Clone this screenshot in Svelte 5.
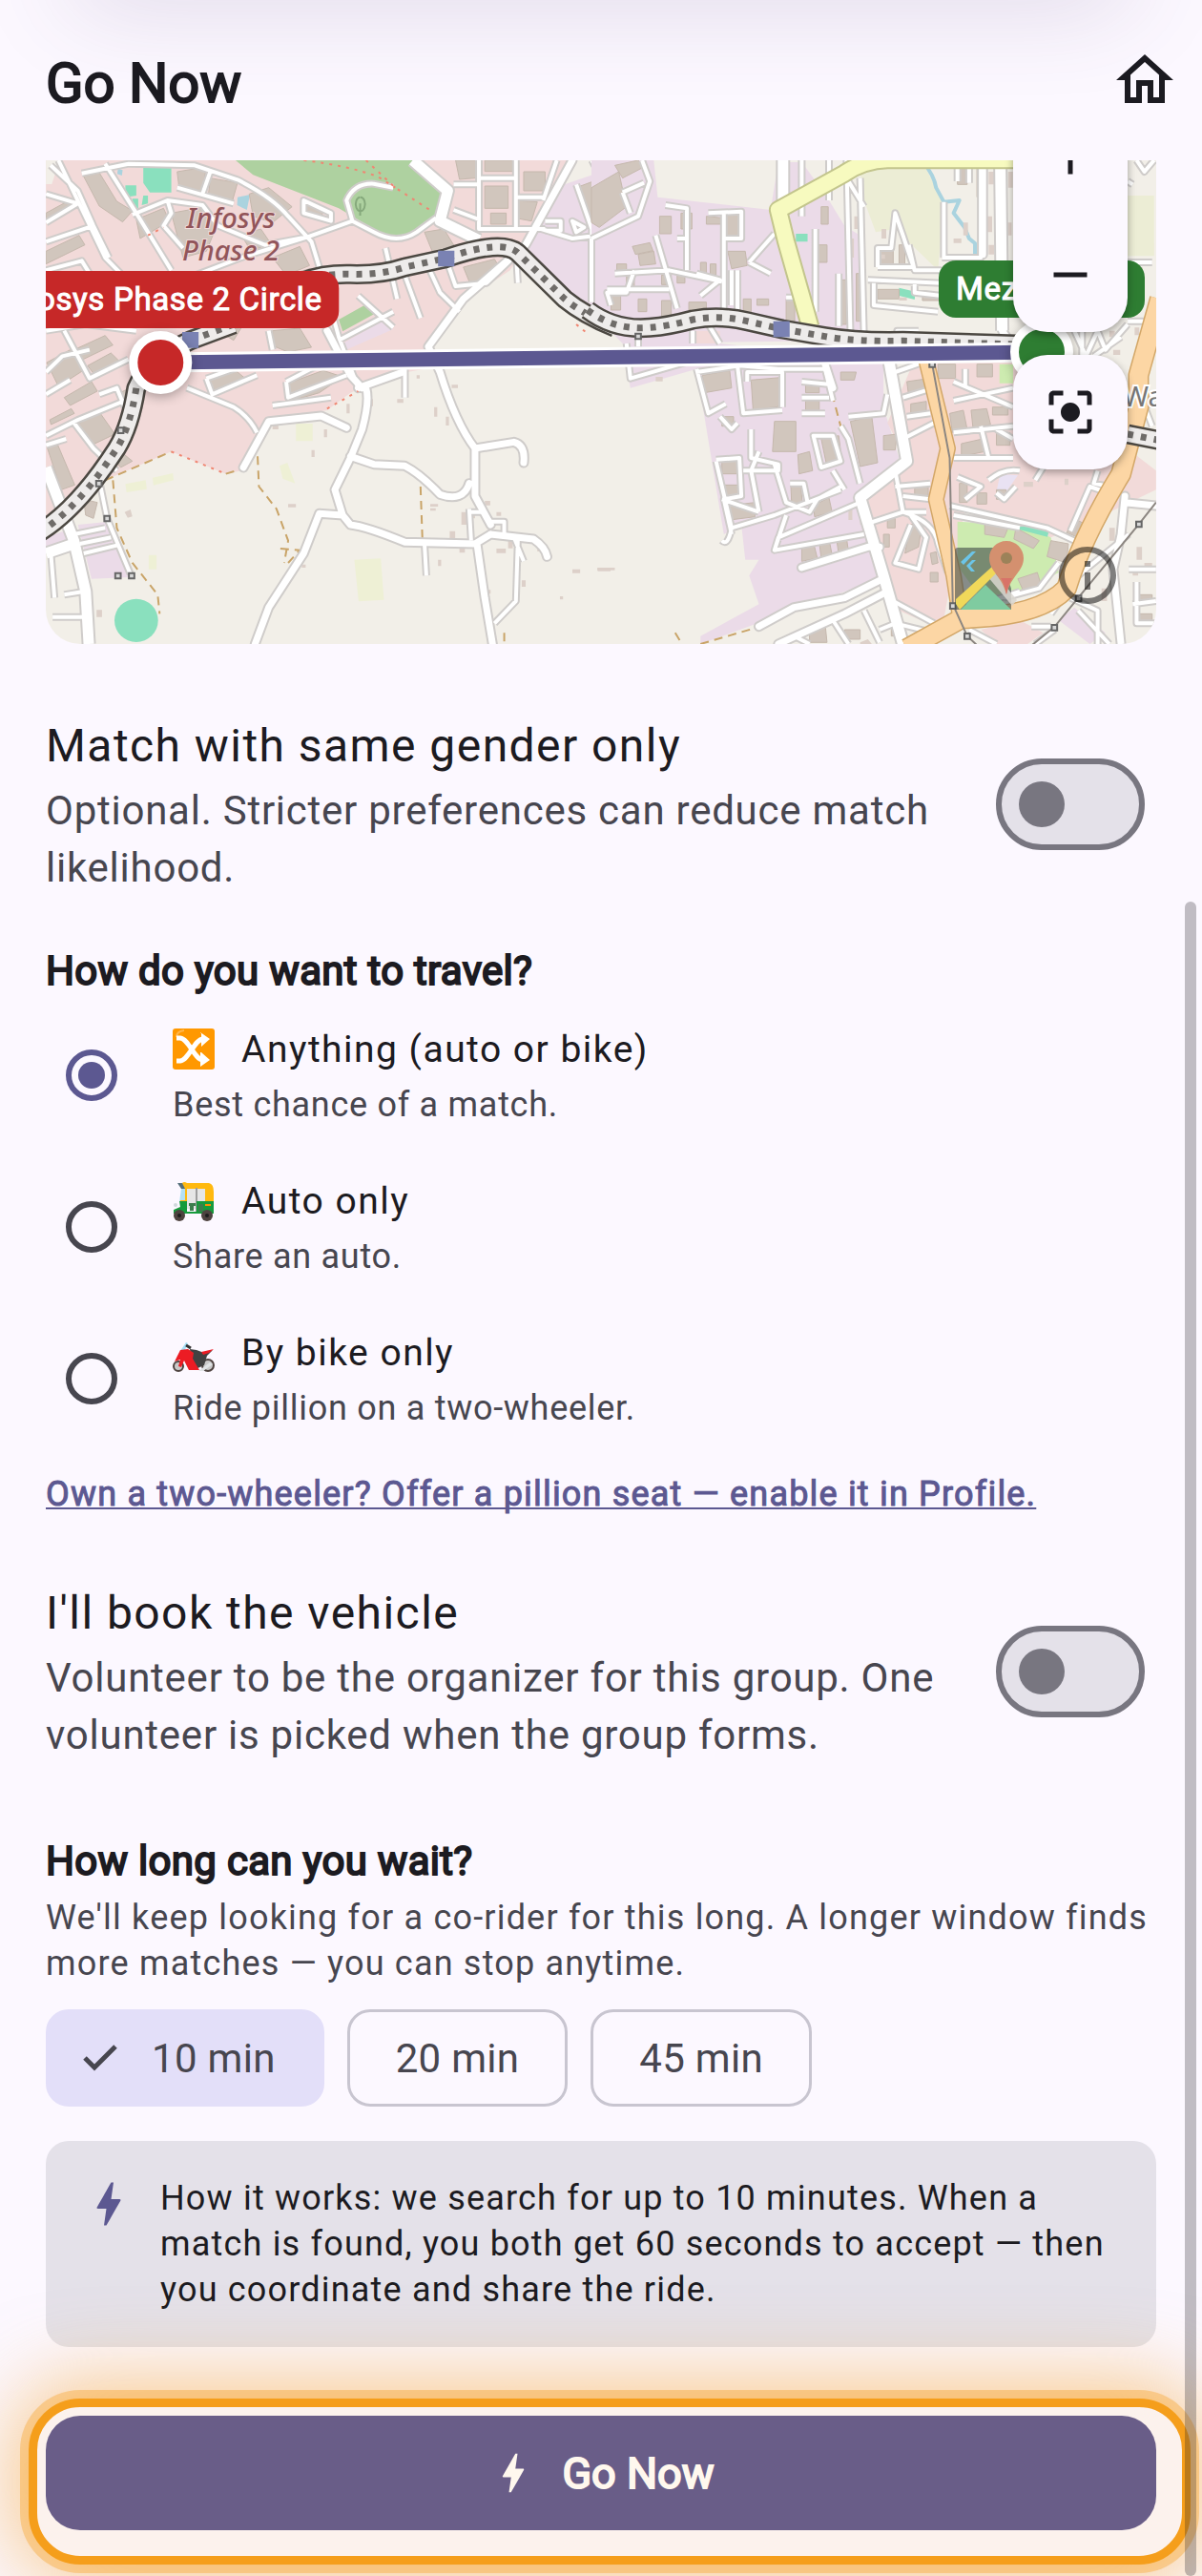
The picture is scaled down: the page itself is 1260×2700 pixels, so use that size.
<script lang="ts">
	type Option = { id: string; title: string; note: string };

	const travelOptions: Option[] = [
		{ id: 'any', title: 'Anything (auto or bike)', note: 'Best chance of a match.' },
		{ id: 'auto', title: 'Auto only', note: 'Share an auto.' },
		{ id: 'bike', title: 'By bike only', note: 'Ride pillion on a two-wheeler.' }
	];
	const waits = [10, 20, 45];

	let sameGender = $state(false);
	let organizer = $state(false);
	let travel = $state('any');
	let wait = $state(10);

	const bolt =
		'M11 21h-1l1-7H7.5c-.58 0-.57-.32-.38-.66.19-.34.05-.08.07-.12C8.48 10.94 10.42 7.54 13 3h1l-1 7h3.5c.49 0 .56.33.47.51l-.07.15C12.96 17.55 11 21 11 21z';

	// The map is drawn as two tiles, each in its own tile units.
	const west = {
		buildings: [
			'M215 75l40-12 45 90 40 30-25 35-60-50z',
			'M455 60l75-15-10 75-60-10zM540 80l70 15-15 65-60-25z',
			'M440 190l90-20 30 50-30 90-60 20z',
			'M350 210l70-35 15 40-75 55z',
			'M118 190l60-40 10 25-70 45zM118 310l85-50 15 30-100 60z',
			'M640 130l50-20 60 60-50 50-50-20zM700 330l70-35 25 60-60 30z',
			'M120 660l60-40 40 60-70 55zM190 620l80-45 20 30-85 50z',
			'M190 860l65-45 40 70-60 35zM122 930l25-15 45 130-35 15z',
			'M225 670l60-40 25 30-60 50zM165 770l70-50 15 30-70 45z',
			'M700 560l70-8 30 60-60 15-40-20zM530 710l70-30 30 30-70 50z',
			'M730 730l100-45 50 20-60 50-70 25z',
			'M1170 24h60v55l-50 5zM1245 24h80v35h-80zM1345 60h55v60h-55z',
			'M1245 105h60v70h-60zM1320 150l60 5-15 60-45-10zM1260 190h40v35h-40z',
			'M1480 110l88-40v160l-50-5z',
			'M1090 250l50-10 30 60-60 10zM1190 360l80-25 20 40-80 45z',
			'M215 1090l35 10-10 50-20-10zM560 560l60-10-20 40z',
			'M740 385l55-20 15 10H740zM620 260l50-20 25 45-50 25zM780 160l55 15-10 25-45-10z',
			'M128 840l55-35 8 15-60 35zM290 960l30-10 20 20-30 20zM300 760l25-15 10 35-25 15z'
		],
		sheds:
			'M700 855h15v15h-15zM832 870h8v25h-8zM800 935h8v22h-8zM740 1105h20v10h-20zM1105 1105h20v8h-20zM1105 1118h14v8h-14zM1155 1190h14v28h-14zM1185 1130h14v40h-14zM1210 1130h10v20h-10zM1245 1095h14v14h-14zM1275 1130h12v12h-12zM1275 1245h24v14h-24zM1305 1220h12v24h-12zM1180 1240h14v18h-14zM1380 1240h10v14h-10zM1160 730h16v10h-16zM1115 800h8v30h-8zM1145 830h8v28h-8zM1020 775h16v12h-16zM1340 1345h10v20h-10zM1470 1310h20v12h-20zM1535 1308h33v8h-33zM1438 1395h8v10h-8zM1240 1375h20v12h-20zM775 1295h10v10h-10zM320 1130l15-8 5 22-12 4zM248 1438h14v22h-14zM890 790h8v30h-8zM1125 1280h8v20h-8zM950 775h8v22h-8zM1070 700h8v10h-8z',
		minor: [
			'M150 24L180 100L270 330L310 380',
			'M270 35L350 190L440 370',
			'M118 130L200 160L118 220M118 280L240 230L280 330',
			'M118 370L210 340L230 380',
			'M210 65L330 35L500 40L610 85Q700 140 740 200L800 280L830 400L870 580L920 740',
			'M340 195L430 150L520 165L560 230L680 290L790 265L905 215',
			'M430 150L440 190L420 230L470 300',
			'M470 400L620 330L790 265',
			'M905 215L890 150Q910 95 960 98L1010 110',
			'M905 215L960 250Q1020 290 1070 250L1120 205',
			'M780 150L850 190L850 215L780 190Z',
			'M540 60L520 130M455 110L600 160',
			'M130 40L200 120L240 230',
			'M1165 100H1230M1230 24V240L1400 240M1325 24V240M1230 80H1325M1325 140H1400M1165 180L1230 210M1430 24L1395 150',
			'M118 560L220 540L350 560M165 560L230 710L330 650M118 690L160 640L230 620M118 760L180 715',
			'M118 890L200 840L320 780M190 850L240 930L300 1000M118 920L170 900M255 760L300 740L320 800',
			'M480 740L600 800Q640 830 660 880',
			'M530 710L600 680L640 660M530 710L545 760L660 700',
			'M735 720L830 660M735 720L740 770L890 700M700 795L850 770',
			'M690 560L700 620M990 300L1020 460M1035 370L1080 520M1100 360L1130 440L1180 500M1150 350L1170 420L1250 410L1310 340M1325 310L1330 410',
			'M920 450L1010 550M870 590L1010 500',
			'M250 1000L275 1150L335 1325',
			'M190 1200L270 1180M205 1230L285 1210M215 1260L300 1235',
			'M1040 680L1040 770M1090 1225L1095 1330M1320 1210L1345 1285M1205 1120L1210 1220M1205 1130H1240L1260 1160H1295V1215',
			'M1520 24L1568 140M1480 100L1520 240V450M1390 240L1470 270L1568 255M1400 215h40v30h-40M1470 215l30 20-20 15z',
			'M1330 1215L1325 1410L1270 1480M130 1250L140 1400M135 1460H220M165 1390L215 1380'
		],
		roads: [
			'M1470 24L1350 290L1190 460L1100 610L1130 690Q1170 850 1220 930L1220 1080L1260 1170',
			'M1220 930L1320 910Q1350 920 1345 975',
			'M920 740L1035 690M940 740Q950 780 930 870L900 960L860 1060L880 1140L900 1170Q940 1175 1040 1225L1220 1230L1260 1200',
			'M900 955L960 980L1040 985Q1080 1010 1130 1075Q1190 1100 1205 1040',
			'M880 1140L820 1135L780 1260L690 1430L655 1545',
			'M625 990L690 845L825 828L890 865',
			'M1225 1230L1245 1400L1265 1545',
			'M1260 1200L1370 1215Q1400 1240 1405 1270',
			'M840 560L900 700L930 740'
		],
		main: ['M1060 24L1150 120L1130 215L1230 275', 'M118 990L190 1220L220 1380L228 1545', 'M118 1260L190 1230'],
		tracks: ['M270 1030L440 940', 'M580 1010L620 995', 'M660 910L665 1050L710 1120L740 1220L730 1290', 'M290 1030L300 1180L340 1290L405 1390L410 1450', 'M1080 1050L1085 1220', 'M720 1245L770 1250L740 1290', 'M1295 1510V1545']
	};

	const east = {
		buildings: [
			'M0 110L70 60L90 170L20 235L0 220z',
			'M60 40L120 24L135 45L80 80z',
			'M345 190h40v80h-40zM230 190h28v50h-28zM175 200h30v55h-30zM295 200l40 5v20h-40z',
			'M105 295l45-12 8 25-45 12zM120 320l40-10 5 40-40 5zM350 310h45l5 45-40 10z',
			'M180 385h25v30h-25zM220 380h20v30h-20zM280 345h15v35h-15zM305 350h15v35h-15zM65 350h25v20h-25zM90 380h20v45h-20z',
			'M50 445h25v50h-25zM120 460h22v40h-22zM180 465h25v50h-25zM250 470h45v25h-45zM390 460h20v45h-20zM425 460h30v20h-30z',
			'M590 170h18v55h-18zM580 290h25v55h-25zM630 400h12v90h-12z',
			'M285 700l70-15 5 55-70 15zM410 715l75-8 5 90-75 12z',
			'M470 845h55v95h-60zM590 900l45-10 8 75-40 12zM665 845l55-15 15 145-45 12z',
			'M335 970h45v40h-45zM340 1045h45v40h-45zM350 1110l70-10v45l-65 10zM530 950l30-10 8 60-35 10z',
			'M512 1045l25-10 5 75-28-5zM570 1110l40-25 8 45-45 15zM335 830h30v30h-30zM550 730h35v25h-35zM550 780h35v30h-35z',
			'M540 1235l30-10 10 50-40 10zM585 1225l25-10 8 50-28 10zM630 1220l25-8 5 40-25 10zM750 890l35-5-5 50h-30z',
			'M810 720l45-8 5 45-45 10zM820 790l40-8v40l-40 8zM920 820l35-10 10 60-38 10zM975 810l40-5 10 50-45 12zM950 915l55-15 5 40-60 15z',
			'M830 1050h35v30h-35zM890 665h45v45h-45zM990 665h40v40h-40z',
			'M820 1170l30-10-10 80-35 20zM1010 1165l60 15-10 30-50-10zM1090 1180l60 40-15 25-50-30z',
			'M945 1040h20v60h-20zM990 1070h25v35h-25zM1040 1060h25v30h-25zM1180 1220l45 10-5 60-50-20z',
			'M740 300h35v50h-35zM790 290h15v80h-15zM735 430h55v30h-55zM850 440h50v25h-50z',
			'M640 400h15v140h-15zM680 380h12v150h-12zM500 460h22v70h-22zM990 40l15 100h-15zM940 40h25v60h-25z',
			'M560 1490l40-10 5 60h-45zM650 1500h40v30h-40zM770 1480h35v40h-35zM1240 1150l30 20-20 40-30-15z',
			'M1095 1340l50-20 10 40-45 20zM1395 1390h45v25h-45zM1400 1450h40v30h-40z',
			'M1030 800h40v25h-40zM1040 880h35v40h-35zM640 690h40l-5 25h-35zM760 1150h20v30h-20zM750 1200h15v40h-15zM870 1320h20v30h-20zM870 1260l15-5 5 35-15 5z'
		],
		sheds:
			'M745 240h12v30h-12zM675 200h12v40h-12zM660 270h14v60h-14zM790 455h20v10h-20zM1020 60h14v40h-14zM1070 60h12v50h-12zM955 220h12v40h-12zM930 270h20v14h-20zM1015 200h14v50h-14zM1020 290h14v30h-14zM1065 220h14v40h-14zM960 390h20v14h-20zM1255 590h10v20h-10zM1290 560h12v18h-12zM1330 560h14v20h-14zM1395 550h12v24h-12zM1410 580h14v24h-14zM1340 620h18v16h-18zM1240 660h14v14h-14zM1385 360h30v20h-30zM165 705h18v14h-18zM15 1305h45v8h-45zM1110 1035h24v16h-24zM1215 1025h10v20h-10zM660 1120h10v35h-10zM690 1150h8v20h-8zM740 320h14v14h-14zM690 1540l20-10 10 15h-30zM1200 1310h20v30h-20zM1330 1180h14v40h-14zM1400 1240h14v40h-14zM1420 1290h20v24h-20zM1310 1370h14v40h-14zM1340 1430h8v30h-8zM1390 1310h14v20h-14z',
		minor: [
			'M0 270L120 200L150 90L130 24M80 125L135 95M80 125L100 190',
			'M190 165L245 175V370M220 270H245M270 380L330 400L280 450M340 190V500M300 190L385 185V270H340',
			'M60 380L200 370L335 405M40 430H200M165 260L220 490M405 345L470 255M405 345L460 380M360 370V480M375 370V500',
			'M540 24V200M610 24V150M0 270V470M110 370L90 440H40L50 480',
			'M655 24L665 560M690 80L700 580M655 80L700 170M575 240V500M635 380V545M500 455H545',
			'M710 400L900 410M735 360V300H770L780 190L800 260L830 370H900M735 360H830M815 290L830 370M725 410V480L890 500M830 410V440L900 450L1083 500',
			'M905 155V330M1000 24V330H900M940 24V90M970 24V95M785 590V560H840',
			'M270 680L300 820L345 790M270 690L380 670L480 680L600 680M375 670L390 820L490 810M400 720V690H490V800',
			'M330 830L360 870L375 850M410 870V960L480 980V1000H390M320 965L380 960L385 1080L340 1090L360 1200M335 1090L430 1130',
			'M320 970L360 1180Q350 1240 335 1220M360 1180L470 1140L640 1060M430 940L410 1000L430 1130M470 980L500 1100L560 1130L580 1090L640 1050',
			'M570 890H620L640 970L590 990ZM600 680L620 780M540 720L620 730M540 770L610 770M540 820H600M640 860L660 900L690 1040',
			'M660 830L750 820L760 760M650 1060L620 1000M510 1040H545L555 1100',
			'M690 1100L480 1210L470 1250L700 1200M470 1250L500 1140M700 1170L800 1130Q880 1160 890 1230L915 1320',
			'M780 1000L800 1130L860 1130M780 1050L870 1040M800 1080L870 1090M820 1170L780 1290L840 1310L860 1210L820 1140',
			'M800 900L880 850M800 770L880 740M810 830L870 820M780 690L850 660',
			'M930 780L1083 740M930 720L1083 800M960 680V740M930 880L1083 860M930 960H1083M1000 860L1020 960M1040 870L1083 900',
			'M920 1110L1170 1180L1240 1220M930 1140L1100 1180M940 1020L1000 1050L960 1090M1020 1030Q1060 990 1100 1000M1040 1070L1060 1090L1090 1050M1140 1030L1160 990',
			'M1230 1190L1280 1050L1350 1080M1300 1000L1290 1040L1330 1050M1390 700L1440 860M1420 760L1440 800',
			'M1100 1380L1000 1420M1060 1400L1150 1370L1200 1290M970 1500L1040 1545M1250 1440L1330 1545M1180 1450L1250 1330L1380 1200',
			'M1190 1500L1140 1545M1130 1490H1180M1230 1400L1300 1440V1545M1390 1420L1450 1410M1400 1350V1480H1450M1380 1310H1450',
			'M620 1470L660 1545M520 1520L560 1545M700 1440L740 1540M740 1500L780 1480L880 1510M760 1400L880 1480',
			'M1390 100L1377 90M1400 24L1420 60L1445 24M1377 345H1440M1240 560L1270 640L1300 560L1320 620L1377 540M1260 560V640M1377 530H1450M1290 640L1360 580',
			'M90 600L100 710L270 650M120 580V610M260 560V600M300 540L330 600'
		],
		roads: ['M540 1305L710 1240L740 1240', 'M430 1490L520 1430L650 1400L740 1345', 'M480 1545L650 1450L760 1380', 'M1370 1080L1360 1200L1340 1310L1360 1545', 'M1370 1100L1450 1110', 'M600 665L620 740', 'M1005 24V320', 'M1055 560L1100 640'],
		main: ['M492 24V160', 'M765 660L810 970L690 1085L750 1330L800 1545', 'M1050 24L1055 560'],
		tracks: ['M600 670L625 790L640 860', 'M280 1545L420 1495', 'M215 1510L230 1540']
	};
</script>

<svelte:head>
	<title>Go Now</title>
</svelte:head>

{#snippet streets(tile)}
	<path class="building" d={tile.buildings.join('')} />
	<path class="building shed" d={tile.sheds} />
	<path class="track" d={tile.tracks.join('')} />
	<path class="minor-case" d={tile.minor.join('')} />
	<path class="road-case" d={tile.roads.join('')} />
	<path class="main-case" d={tile.main.join('')} />
	<path class="minor" d={tile.minor.join('')} />
	<path class="road" d={tile.roads.join('')} />
	<path class="main-road" d={tile.main.join('')} />
{/snippet}

{#snippet rail(d)}
	<path class="rail-edge" {d} />
	<path class="rail-bed" {d} />
	<path class="rail-dots" {d} />
{/snippet}

<div class="page">
	<div class="top-glow"></div>

	<header>
		<h1>Go Now</h1>
		<button class="home" aria-label="Home">
			<svg viewBox="0 0 24 24"><path d="M12 5.69l5 4.5V18h-2v-6H9v6H7v-7.81l5-4.5M12 3L2 12h3v8h6v-6h2v6h6v-8h3L12 3z" /></svg>
		</button>
	</header>

	<main>
		<section class="map" aria-label="Route map">
			<svg class="tiles" viewBox="0 0 1164 507" preserveAspectRatio="xMidYMid slice">
				<rect width="1164" height="507" fill="#f2efe8" />
				<g transform="translate(-48 -8) scale(.40816 .33333)">
					<path fill="#f2dad9" d="M118 24H1470L1350 290L1310 370L1200 460L1100 600L1090 680L1000 700L900 755L840 810L690 840L620 1000L580 1010L440 940L270 1030L200 1140L118 1150Z" />
					<path fill="#f2efe8" d="M118 24h35l-20 75h-15z" />
					<path fill="#ebdbe8" d="M1568 50L1450 100L1380 250L1350 290L1430 430L1568 540ZM200 1170L280 1160L335 1335L235 1340ZM880 600L980 530L1010 555L880 625ZM118 1210L175 1185L185 1235L118 1255Z" />
					<path fill="#aed1a0" d="M605 24H1060L1135 110L1130 210L1050 265Q1000 270 960 240L870 175L650 70ZM870 525L950 470L965 505L880 562Z" />
					<path fill="#8ae0be" d="M385 30h55v95h-55l-17-30v-50zM322 103h28v32l-28 5zM340 145h15v30h-12zM368 135h12v25l-16 5z" />
					<ellipse cx="350" cy="1471" rx="56" ry="68" fill="#8ae0be" />
					<path fill="#aad3df" d="M610 140l32-8-8 48-25-15zM303 50l12 5-2 17-12-5z" />
					<path fill="#eef0d5" d="M760 852h43v55h-43zM910 1280l68-4 8 130-65 5zM322 1042l52-12 3 28-52 10zM392 1022l52-14 2 22-52 16zM718 985l20-10 20 65-32-15zM382 1265h20v45h-20z" />
					{@render streets(west)}
					<path class="footway" d="M780 24Q890 40 970 75L1015 110M940 24L1015 110L1110 185M440 940L580 1010M840 805L920 750M380 260L420 235M1480 540L1510 570" />
					{@render rail('M100 1195Q200 1120 300 930Q335 860 350 740Q380 650 490 590L600 540M780 405Q830 380 900 382Q980 385 1040 360L1145 332Q1290 270 1330 315Q1400 400 1450 460Q1500 510 1580 550')}
					<path fill="#7a82b3" d="M1125 308h42v50h-42zM468 564h42v50h-42z" />
					<path class="post" d="M247 1032h14v17h-14zM268 1142h14v17h-14zM296 1322h14v17h-14zM331 1322h14v17h-14zM303 865h14v17h-14z" />
					<path fill="none" stroke="#86a97c" stroke-width="2" d="M925 140a12 22 0 1 0 1 0M925 160v38" />
				</g>
				<g transform="translate(572 -8) scale(.40816 .33333)">
					<path fill="#ebdbe8" d="M0 24H160L170 140L460 180L480 30H540L600 130L650 230L690 260L700 590L80 600L0 500ZM80 600L260 590L750 660L750 800L790 960L690 1080L740 1340L560 1420L280 1545V1520L430 1420L405 1330L430 1280H395L385 1170L340 1200L270 680L100 740ZM1200 1470L1240 1430L1320 1510L1280 1545Z" />
					<path fill="#f2dad9" d="M760 850L830 650L1090 660L1450 1000V1060L1280 1160L1180 1210L960 1120L930 1300L900 1500L790 1440L700 1090L810 970ZM265 560H330V600H265ZM1000 1500L1100 1470L1160 1510L1120 1545H1040Z" />
					<path fill="#ecedd5" d="M690 60L850 30L905 155L890 370L780 240L730 250L700 150ZM1377 135h68v190h-68z" />
					<path fill="#f2efe8" d="M710 480L1083 500V590L730 580Z" />
					<path fill="#cdebb0" d="M940 1160L1100 1170L1180 1210L1200 1320L1080 1400L1000 1400L940 1300ZM1048 665h35v60h-35z" />
					<path fill="#8ae0be" d="M1095 1165l80 25-4 18-80-25zM790 425l42 12-2 25-40-12zM525 255h30v25h-30z" />
					<path fill="#e9e2f3" d="M1050 1010l45 5-35 60-20-10z" />
					<path class="stream" d="M848 24Q880 70 885 110L905 155L945 150L930 190L958 235L970 270L985 285V325" />
					{@render streets(east)}
					<path class="yellow-case" d="M562 548L500 280L480 180L650 65Q700 24 760 22H1090" />
					<path class="yellow-road" d="M562 548L500 280L480 180L650 65Q700 24 760 22H1090" />
					<path class="orange-case" d="M860 655L915 930L885 1090L930 1330L945 1450" />
					<path class="orange-case wide" d="M810 1560L950 1465Q1150 1460 1220 1370Q1260 1210 1360 1010L1405 800L1405 700L1460 460" />
					<path class="orange-road" d="M860 655L915 930L885 1090L930 1330L945 1450" />
					<path class="orange-road wide" d="M810 1560L950 1465Q1150 1460 1220 1370Q1260 1210 1360 1010L1405 800L1405 700L1460 460" />
					<path fill="none" stroke="#8c8681" stroke-width="2" d="M875 665L920 960L928 1420L965 1520L1000 1560M1120 1560L1190 1490L1250 1400L1406 1168L1450 1100" />
					{@render rail('M-10 495Q60 560 150 550Q200 545 260 525Q330 510 400 530L490 555L600 578Q680 595 800 592L1090 603M1377 885L1460 905')}
					<path fill="#7a82b3" d="M467 530h42v50h-42z" />
					<path class="post" d="M868 657h14v17h-14zM921 1417h14v17h-14zM958 1512h14v17h-14zM1182 1485h14v17h-14zM1244 1393h14v17h-14zM1399 1160h14v17h-14zM113 569h14v17h-14z" />
				</g>
				<text class="area" x="194" y="71">Infosys</text>
				<text class="area" x="194" y="105">Phase 2</text>
				<text class="town" x="1129" y="258">Wakad</text>
				<path class="route-case" d="M120 212L1044 201" />
				<path class="route" d="M120 212L1044 201" />
			</svg>

			<div class="marker start"><span class="tag">Infosys Phase 2 Circle</span><span class="dot"></span></div>
			<div class="marker end"><span class="tag">Mezza 9</span><span class="dot"></span></div>

			<div class="zoom">
				<button aria-label="Zoom in"><svg viewBox="0 0 24 24"><path d="M19 13h-6v6h-2v-6H5v-2h6V5h2v6h6v2z" /></svg></button>
				<button aria-label="Zoom out"><svg viewBox="0 0 24 24"><path d="M19 13H5v-2h14v2z" /></svg></button>
			</div>
			<button class="recenter" aria-label="Recenter">
				<svg viewBox="0 0 24 24"><path d="M12 8c-2.21 0-4 1.79-4 4s1.79 4 4 4 4-1.79 4-4-1.79-4-4-4zm-7 7H3v4c0 1.1.9 2 2 2h4v-2H5v-4zM5 5h4V3H5c-1.1 0-2 .9-2 2v4h2V5zm14-2h-4v2h4v4h2V5c0-1.1-.9-2-2-2zm0 16h-4v2h4c1.1 0 2-.9 2-2v-4h-2v4z" /></svg>
			</button>

			<div class="credits">
				<svg class="map-logo" viewBox="0 0 72 72">
					<path d="M3 7H45L59 50V72H0V10Q0 7 3 7Z" fill="#3f4a48" opacity=".6" />
					<path d="M6 22L18 11h4L9 25zM12 26l6-6h4l-6 6 5 6h-4z" fill="#6cc5e8" />
					<path d="M34 37L41 32L65 62L60 68Z" fill="#d9d6cf" opacity=".85" />
					<path d="M6 72L32 46L59 72Z" fill="#7fcba0" />
					<path d="M1 66V61L40 26L44 33L5 72Z" fill="#f0d85a" />
					<path d="M54 0C44 0 36 8 36 18C36 32 49 36 54 56C59 36 72 32 72 18C72 8 64 0 54 0Z" fill="#d4906f" />
					<path d="M48 39Q52 45 54 56Q56 45 60 39Z" fill="#d87368" />
					<circle cx="54" cy="18" r="6" fill="#9c8259" />
				</svg>
				<button class="info" aria-label="Map attribution">
					<svg viewBox="0 0 24 24"><path d="M11 7h2v2h-2zm0 4h2v6h-2zm1-9C6.48 2 2 6.48 2 12s4.480 10 10 10 10-4.480 10-10S17.520 2 12 2zm0 18c-4.410 0-8-3.590-8-8s3.590-8 8-8 8 3.590 8 8-3.590 8-8 8z" /></svg>
				</button>
			</div>
		</section>

		<label class="switch-row">
			<span class="switch-text">
				<span class="switch-title">Match with same gender only</span>
				<span class="switch-note">Optional. Stricter preferences can reduce match likelihood.</span>
			</span>
			<input type="checkbox" role="switch" bind:checked={sameGender} />
		</label>

		<h2 id="travel-heading">How do you want to travel?</h2>
		<div class="options" role="radiogroup" aria-labelledby="travel-heading">
			{#each travelOptions as option (option.id)}
				<label class="option">
					<input type="radio" name="travel" value={option.id} bind:group={travel} />
					<span class="option-text">
						<span class="option-title">
							<svg viewBox="0 0 44 44" aria-hidden="true">
								{#if option.id === 'any'}
									<rect width="44" height="43" rx="3" fill="#ff9800" />
									<path d="M4 9Q4 3 12 2" stroke="#ffb74d" stroke-width="2" fill="none" />
									<path d="M4 10H8C17 11 23 33 32 33M4 34H8C17 33 23 11 32 11" stroke="#fff" stroke-width="5" fill="none" />
									<path d="M29 4L39 11L30 19V4ZM30 25L39 33L29 40V25Z" fill="#fff" />
								{:else if option.id === 'auto'}
									<path d="M5 3L12 3L14 9L9 9Z" fill="#546e7a" />
									<path d="M9 9H14V23H7Z" fill="#b3e0f5" />
									<path d="M10 3Q12 1 15 3H38Q43 4 43 12V23H8V21H13V9Z" fill="#ffb90f" />
									<path d="M15 9H24V30H15ZM25 9H34V22H25Z" fill="#e6e6e6" />
									<path d="M24 8H26V34H24Z" fill="#9e9e9e" />
									<path d="M7 22H15V33H25V22H43V35H1V31L8 28Z" fill="#169b3c" />
									<path d="M17 24H24V27H22V32H18V27H17ZM27 25H32V33H27Z" fill="#3d7d4d" />
									<path d="M34 25H40V27H34Z" fill="#ff8f00" />
									<circle cx="3" cy="26" r="2" fill="#cfd8dc" />
									<circle cx="7" cy="37" r="6" fill="#4e4340" /><circle cx="7" cy="37" r="2" fill="#1d1d1d" />
									<circle cx="36" cy="37" r="6" fill="#4e4340" /><circle cx="36" cy="37" r="2" fill="#1d1d1d" />
								{:else}
									<g transform="translate(0 6)">
										<path d="M8 14L14 5L16 6L12 15Z" fill="#a5def5" />
										<circle cx="6" cy="30" r="5" fill="#c9c9c9" stroke="#4e4340" stroke-width="2" />
										<circle cx="37" cy="29" r="6" fill="#c9c9c9" stroke="#4e4340" stroke-width="2" />
										<path d="M18 12L25 13L33 16L42 13L36 19L33 29L24 33L19 20Z" fill="#424242" />
										<path d="M5 19L8 13L16 12L22 16L21 22L28 34H17L12 24L9 31L6 30L8 23L2 25ZM30 15L43 12L38 16L32 18Z" fill="#ec1c24" />
										<path d="M27 35L39 26L42 28L32 35Z" fill="#e0e4e6" />
										<path d="M14 8L19 11" stroke="#333" stroke-width="3" />
									</g>
								{/if}
							</svg>
							{option.title}
						</span>
						<span class="option-note">{option.note}</span>
					</span>
				</label>
			{/each}
		</div>

		<a class="profile-link" href="#profile">Own a two-wheeler? Offer a pillion seat — enable it in Profile.</a>

		<label class="switch-row">
			<span class="switch-text">
				<span class="switch-title">I'll book the vehicle</span>
				<span class="switch-note">Volunteer to be the organizer for this group. One volunteer is picked when the group forms.</span>
			</span>
			<input type="checkbox" role="switch" bind:checked={organizer} />
		</label>

		<h2>How long can you wait?</h2>
		<p class="help">We'll keep looking for a co-rider for this long. A longer window finds more matches — you can stop anytime.</p>

		<div class="chips">
			{#each waits as minutes}
				<button class="chip" class:selected={wait === minutes} aria-pressed={wait === minutes} onclick={() => (wait = minutes)}>
					{#if wait === minutes}
						<svg viewBox="0 0 54 54"><path d="M11 27L21 37L43 15" /></svg>
					{/if}
					{minutes} min
				</button>
			{/each}
		</div>

		<div class="how">
			<svg viewBox="0 0 24 24"><path d={bolt} /></svg>
			<p>How it works: we search for up to {wait} minutes. When a match is found, you both get 60 seconds to accept — then you coordinate and share the ride.</p>
		</div>

		<div class="cta">
			<button class="go">
				<svg viewBox="0 0 24 24"><path d={bolt} /></svg>
				Go Now
			</button>
		</div>
	</main>

	<div class="scroll-thumb"></div>
</div>

<style>
	:global(body) {
		background: #fcf8ff;
		overflow: hidden;
	}
	.page {
		position: relative;
		overflow: hidden;
		min-height: 100vh;
		font-family: Roboto, 'Liberation Sans', sans-serif;
		color: #1c1b21;
	}
	button {
		border: 0;
		padding: 0;
		background: none;
		font: inherit;
		color: inherit;
		cursor: pointer;
	}
	svg { display: block; fill: currentColor; }
	h1, h2, p { margin: 0; }

	/* emphasised text is the regular face, thickened */
	h1, h2, .tag, .profile-link, .go {
		font-weight: 400;
		-webkit-text-stroke: 2px currentColor;
	}

	.top-glow {
		position: absolute;
		top: -60px;
		left: 72px;
		right: 72px;
		height: 60px;
		border-radius: 36px;
		box-shadow: 0 0 100px rgba(80, 66, 120, 0.22);
	}
	header {
		display: flex;
		align-items: center;
		justify-content: space-between;
		height: 168px;
		padding: 0 24px 0 48px;
	}
	h1 {
		padding-top: 6px;
		font-size: 58px;
		line-height: 72px;
	}
	.home svg { width: 72px; height: 72px; }

	main { padding: 0 48px; }

	/* map */
	.map {
		position: relative;
		height: 507px;
		margin-bottom: 71px;
		overflow: hidden;
		border-radius: 0 0 36px 36px;
	}
	.tiles { width: 100%; height: 100%; }
	.tiles path { vector-effect: non-scaling-stroke; }
	.building { fill: #d1c6bd; stroke: #c5b8ad; stroke-width: 1; }
	.shed { fill: #ddd0c9; stroke: none; }
	.minor-case, .minor, .road-case, .road, .main-case, .main-road,
	.rail-edge, .rail-bed, .rail-dots, .track, .footway, .stream,
	.yellow-case, .yellow-road, .orange-case, .orange-road {
		fill: none;
		stroke-linejoin: round;
	}
	.minor-case { stroke: #cfccca; stroke-width: 8; }
	.minor { stroke: #fff; stroke-width: 4; }
	.road-case { stroke: #cfccca; stroke-width: 11; stroke-linecap: round; }
	.road { stroke: #fff; stroke-width: 7; stroke-linecap: round; }
	.main-case { stroke: #cfccca; stroke-width: 15; }
	.main-road { stroke: #fff; stroke-width: 11; }
	.track { stroke: #c9a468; stroke-width: 2; stroke-dasharray: 9 6; }
	.footway { stroke: #f08672; stroke-width: 2; stroke-dasharray: 3 6; }
	.stream { stroke: #aad3df; stroke-width: 4; }
	.yellow-case { stroke: #c3c58d; stroke-width: 20; }
	.yellow-road { stroke: #f7fabf; stroke-width: 16; }
	.orange-case { stroke: #d3a768; stroke-width: 17; }
	.orange-road { stroke: #fcd6a4; stroke-width: 14; }
	.orange-case.wide { stroke-width: 22; }
	.orange-road.wide { stroke-width: 19; }
	.rail-edge { stroke: #4c4842; stroke-width: 21; }
	.rail-bed { stroke: #eeeceb; stroke-width: 16; }
	.rail-dots { stroke: #6f6c69; stroke-width: 7; stroke-dasharray: 6 8; }
	.post { fill: #d8d8d8; stroke: #666; stroke-width: 2; }
	.area {
		font: italic 500 29px 'Noto Sans', sans-serif;
		fill: #91555a;
		stroke: #f2dad9;
		stroke-width: 2px;
		paint-order: stroke;
		text-anchor: middle;
	}
	.town {
		font: 29px 'Noto Sans', sans-serif;
		fill: #777;
		stroke: #fff;
		stroke-width: 4px;
		paint-order: stroke;
	}
	.route-case { stroke: #fff; stroke-width: 21; }
	.route { stroke: #5c5891; stroke-width: 15; }

	.marker {
		position: absolute;
		display: flex;
		flex-direction: column;
		align-items: center;
		gap: 3px;
		transform: translateX(-50%);
	}
	.marker.start { left: 120px; top: 116px; --pin: #c62828; }
	.marker.end { right: 120px; top: 105px; --pin: #2e7d32; transform: translateX(50%); }
	.tag {
		box-sizing: border-box;
		min-width: 216px;
		padding: 9px 18px;
		border-radius: 18px;
		background: var(--pin);
		color: #fff;
		font-size: 33px;
		line-height: 42px;
		letter-spacing: 0.02em;
		-webkit-text-stroke-width: 1px;
		white-space: nowrap;
	}
	.dot {
		box-sizing: border-box;
		width: 66px;
		height: 66px;
		border: 9px solid #fff;
		border-radius: 50%;
		background: var(--pin);
		box-shadow: 0 3px 12px rgba(0, 0, 0, 0.3);
	}
	.zoom, .recenter {
		position: absolute;
		right: 30px;
		width: 120px;
		border-radius: 36px;
		background: #fcf8ff;
		box-shadow: 0 3px 9px rgba(0, 0, 0, 0.35);
	}
	.zoom { top: -63px; display: grid; gap: 3px; }
	.zoom button, .recenter {
		display: grid;
		place-items: center;
		height: 120px;
	}
	.recenter { top: 204px; }
	.zoom svg, .recenter svg { width: 60px; height: 60px; }
	.credits {
		position: absolute;
		right: 36px;
		bottom: 36px;
		display: flex;
		align-items: center;
		gap: 31px;
	}
	.map-logo { width: 72px; height: 72px; }
	.info svg { width: 72px; height: 72px; color: rgba(0, 0, 0, 0.5); }

	/* switches */
	.switch-row {
		display: flex;
		align-items: center;
		justify-content: space-between;
		gap: 48px;
		padding-right: 12px;
		margin-bottom: 49px;
	}
	.switch-text { display: grid; gap: 2px; max-width: 948px; }
	.switch-title { font-size: 48px; line-height: 72px; letter-spacing: 0.03em; }
	.switch-note { font-size: 42px; line-height: 60px; letter-spacing: 0.018em; color: #47464f; }
	.switch-row input {
		appearance: none;
		flex: none;
		display: flex;
		align-items: center;
		box-sizing: border-box;
		width: 156px;
		height: 96px;
		margin: 0;
		padding: 0 18px;
		border: 6px solid #787680;
		border-radius: 48px;
		background: #e4e1e9;
	}
	.switch-row input::before {
		content: '';
		width: 48px;
		height: 48px;
		border-radius: 50%;
		background: #787680;
	}
	.switch-row input:checked { justify-content: flex-end; border-color: #5c5891; background: #5c5891; }
	.switch-row input:checked::before { background: #fff; }

	h2 { font-size: 42px; line-height: 58px; letter-spacing: 0.007em; }

	/* travel options */
	.option {
		display: flex;
		align-items: center;
		gap: 58px;
		height: 159px;
		padding-left: 21px;
	}
	.option input {
		appearance: none;
		flex: none;
		display: grid;
		place-items: center;
		box-sizing: border-box;
		width: 54px;
		height: 54px;
		margin: 0;
		border: 6px solid #47464f;
		border-radius: 50%;
	}
	.option input:checked { border-color: #5c5891; }
	.option input:checked::before {
		content: '';
		width: 28px;
		height: 28px;
		border-radius: 50%;
		background: #5c5891;
	}
	.option-text { display: grid; gap: 5px; }
	.option-title {
		display: flex;
		align-items: center;
		gap: 28px;
		font-size: 39px;
		line-height: 58px;
		letter-spacing: 0.038em;
	}
	.option-title svg { width: 44px; height: 44px; }
	.option-note { font-size: 36px; line-height: 48px; letter-spacing: 0.02em; color: #47464f; }

	.profile-link {
		display: block;
		margin: 18px 0 65px;
		color: #5c5891;
		font-size: 36px;
		line-height: 48px;
		letter-spacing: 0.033em;
		-webkit-text-stroke-width: 1px;
		text-decoration-thickness: 2px;
		text-underline-offset: 2px;
		text-decoration-skip-ink: none;
	}
	.profile-link + .switch-row { margin-bottom: 73px; }

	.help {
		margin: 6px 0 24px;
		font-size: 36px;
		line-height: 48px;
		letter-spacing: 0.033em;
		color: #47464f;
	}
	.chips { display: flex; flex-wrap: wrap; gap: 24px; }
	.chip {
		display: flex;
		align-items: center;
		gap: 27px;
		height: 102px;
		padding: 0 48px;
		border: 3px solid #c8c5d0;
		border-radius: 24px;
		color: #47464f;
		font-size: 42px;
		letter-spacing: 0.007em;
	}
	.chip.selected { padding: 0 48px 0 27px; border-color: #e3dff9; background: #e3dff9; }
	.chip svg { width: 54px; height: 54px; fill: none; stroke: currentColor; stroke-width: 5; }

	.how {
		display: flex;
		gap: 24px;
		margin: 36px 0 72px;
		padding: 36px;
		border-radius: 24px;
		background: #e4e1e9;
		font-size: 36px;
		line-height: 48px;
		letter-spacing: 0.033em;
	}
	.how svg { flex: none; width: 60px; height: 60px; color: #5c5891; }

	/* highlighted call to action */
	.cta { position: relative; padding-bottom: 48px; }
	.cta::before {
		content: '';
		position: absolute;
		inset: -18px -36px 12px -18px;
		box-sizing: border-box;
		border: 9px solid #f59e1b;
		border-radius: 54px;
		background: #fcf2ed;
		box-shadow: 0 0 0 9px rgba(245, 158, 27, 0.35), 0 0 84px 18px rgba(245, 158, 27, 0.5);
	}
	.go {
		position: relative;
		display: flex;
		align-items: center;
		justify-content: center;
		gap: 24px;
		width: 100%;
		height: 120px;
		border-radius: 36px;
		background: #695d88;
		color: #fff8ee;
		font-size: 45px;
	}
	.go svg { width: 54px; height: 54px; }

	.scroll-thumb {
		position: absolute;
		top: 35%;
		right: 6px;
		bottom: 0;
		width: 12px;
		border-radius: 6px;
		background: rgba(28, 27, 33, 0.27);
	}
</style>
